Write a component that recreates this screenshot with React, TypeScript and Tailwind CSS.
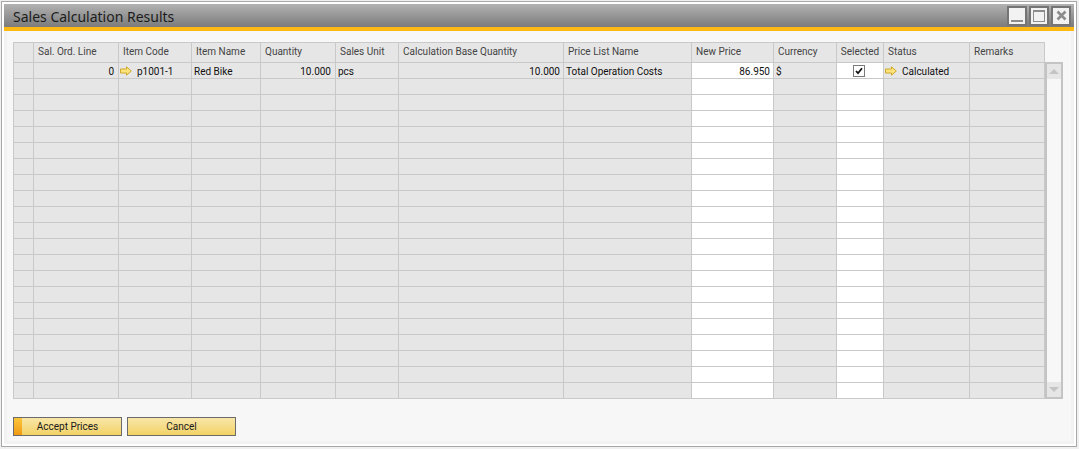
const columns = [
  { name: "", width: "w-[20px]" },
  { name: "Sal. Ord. Line", width: "w-[85px]" },
  { name: "Item Code", width: "w-[73px]" },
  { name: "Item Name", width: "w-[69px]" },
  { name: "Quantity", width: "w-[75px]" },
  { name: "Sales Unit", width: "w-[63px]" },
  { name: "Calculation Base Quantity", width: "w-[165px]" },
  { name: "Price List Name", width: "w-[128px]" },
  { name: "New Price", width: "w-[82px]", white: true },
  { name: "Currency", width: "w-[63px]" },
  { name: "Selected", width: "w-[47px]", white: true, center: true },
  { name: "Status", width: "w-[86px]" },
  { name: "Remarks", width: "w-[75px]" },
];

function Arrow() {
  return (
    <svg width="12" height="10" viewBox="0 0 12 10" className="ml-[1px] shrink-0">
      <path d="M0.5 3h6V0.8L11.3 5 6.5 9.2V7h-6z" fill="#fbe27a" stroke="#cfa92c" strokeWidth="1" />
    </svg>
  );
}

function firstRowCell(index: number) {
  switch (index) {
    case 1:
      return <span className="mt-[1px] w-full pr-[4px] text-right">0</span>;
    case 2:
      return (
        <>
          <Arrow />
          <span className="ml-[5px] mt-[1px]">p1001-1</span>
        </>
      );
    case 3:
      return <span className="mt-[1px] pl-[2px]">Red Bike</span>;
    case 4:
      return <span className="mt-[1px] w-full pr-[4px] text-right">10.000</span>;
    case 5:
      return <span className="mt-[1px] pl-[2px]">pcs</span>;
    case 6:
      return <span className="mt-[1px] w-full pr-[3px] text-right">10.000</span>;
    case 7:
      return <span className="mt-[1px] pl-[2px]">Total Operation Costs</span>;
    case 8:
      return <span className="mt-[1px] w-full pr-[3px] text-right">86.950</span>;
    case 9:
      return <span className="mt-[1px] pl-[2px]">$</span>;
    case 10:
      return (
        <span className="ml-[16px] flex h-[12px] w-[12px] items-center justify-center border border-[#7a7a7a] bg-white">
          <svg width="8" height="8" viewBox="0 0 8 8">
            <path d="M1 4l2 2.2L7 1.2" fill="none" stroke="#111" strokeWidth="1.8" />
          </svg>
        </span>
      );
    case 11:
      return (
        <>
          <Arrow />
          <span className="ml-[5px] mt-[1px]">Calculated</span>
        </>
      );
    default:
      return null;
  }
}

export default function App() {
  const rows = Array.from({ length: 21 });

  return (
    <div
      className="h-[449px] w-[1079px] overflow-hidden bg-[#f0f0f0] p-[1px] text-[10px] text-[#111]"
      style={{ fontFamily: "Roboto, Tahoma, sans-serif" }}
    >
      <div className="h-[446px] w-[1076px] border border-[#a8a8a8] bg-white p-[2px]">
        <div className="flex h-full flex-col bg-[#f2f2f2]">
          {/* Title bar */}
          <div className="flex h-[23px] shrink-0 items-center justify-between bg-gradient-to-b from-[#b3b3b3] to-[#7b7b7b] pl-[9px] pr-[3px]">
            <span className="pt-[1px] text-[14px] text-[#1c1c1c]" style={{ fontFamily: '"Noto Sans", sans-serif' }}>
              Sales Calculation Results
            </span>
            <div className="flex gap-[2px]">
              <div className="flex h-[20px] w-[20px] items-end justify-center border-2 border-[#757575] bg-[#f2f2f2] pb-[2px]">
                <div className="h-[2px] w-[12px] bg-[#8c8c8c]" />
              </div>
              <div className="flex h-[20px] w-[20px] items-center justify-center border-2 border-[#757575] bg-[#f2f2f2]">
                <div className="h-[12px] w-[12px] border border-t-2 border-[#8c8c8c]" />
              </div>
              <div className="flex h-[20px] w-[20px] items-center justify-center border-2 border-[#757575] bg-[#f2f2f2]">
                <svg width="11" height="11" viewBox="0 0 11 11">
                  <path d="M1.5 1.5l8 8M9.5 1.5l-8 8" stroke="#8c8c8c" strokeWidth="2.6" />
                </svg>
              </div>
            </div>
          </div>
          <div className="h-[4px] shrink-0 bg-[#fcb813]" />

          {/* Matrix */}
          <div className="mx-[3px] mb-[3px] flex flex-1 flex-col bg-[#f7f7f7] pl-[6px] pt-[11px]">
            <div className="flex items-start">
              <div className="w-[1032px] shrink-0 border-l border-t border-[#c9c9c9]">
                <div className="flex h-[20px]">
                  {columns.map((col, i) => (
                    <div
                      key={i}
                      className={`${col.width} flex shrink-0 items-center border-b border-r border-[#c9c9c9] bg-[#e6e6e6] pb-[3px] ${col.center ? "justify-center" : "pl-[4px]"} text-[#444]`}
                    >
                      {col.name}
                    </div>
                  ))}
                </div>
                {rows.map((_, r) => (
                  <div key={r} className="flex h-[16px]">
                    {columns.map((col, i) => (
                      <div
                        key={i}
                        className={`${col.width} flex shrink-0 items-center border-b border-r border-[#c9c9c9] ${col.white ? "bg-white" : "bg-[#e6e6e6]"}`}
                      >
                        {r === 0 ? firstRowCell(i) : null}
                      </div>
                    ))}
                  </div>
                ))}
              </div>

              {/* Scroll bar */}
              <div className="mt-[20px] flex h-[337px] w-[18px] shrink-0 flex-col justify-between border-2 border-[#c4c4c4] bg-[#f7f7f7]">
                <div className="flex h-[15px] items-center justify-center bg-[#e6e6e6]">
                  <div className="h-0 w-0 border-x-[5px] border-b-[5px] border-x-transparent border-b-[#c4c4c4]" />
                </div>
                <div className="flex h-[15px] items-center justify-center bg-[#e6e6e6]">
                  <div className="h-0 w-0 border-x-[5px] border-t-[5px] border-x-transparent border-t-[#c4c4c4]" />
                </div>
              </div>
            </div>

            {/* Buttons */}
            <div className="mt-[18px] flex gap-[5px]">
              <button className="relative flex h-[19px] w-[109px] items-center justify-center border border-[#6b6b6b] bg-gradient-to-b from-[#f8e6a8] to-[#f3d264] pb-[1px] text-[10px] text-[#1a1a1a]">
                <span className="absolute inset-y-0 left-0 w-[8px] bg-gradient-to-b from-[#fcc53a] to-[#f09a10]" />
                Accept Prices
              </button>
              <button className="flex h-[19px] w-[109px] items-center justify-center border border-[#6b6b6b] bg-gradient-to-b from-[#f8e6a8] to-[#f3d264] pb-[1px] text-[10px] text-[#1a1a1a]">
                Cancel
              </button>
            </div>
          </div>
        </div>
      </div>
    </div>
  );
}
